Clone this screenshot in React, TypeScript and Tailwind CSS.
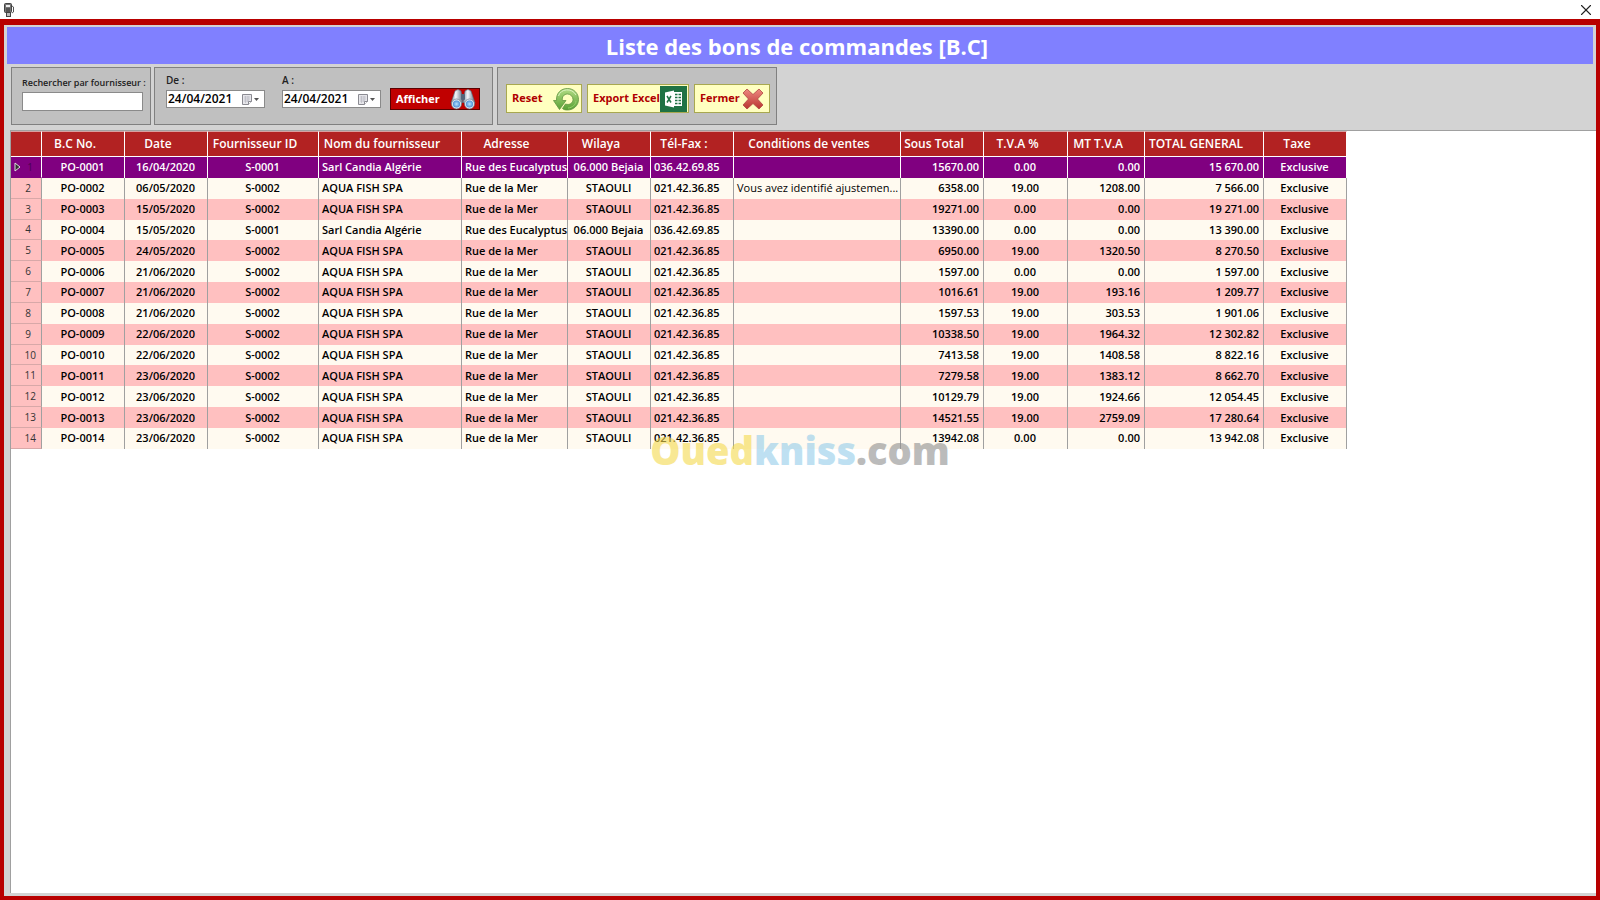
import { X } from "lucide-react";
import clsx from "clsx";

type Align = "left" | "center" | "right";

const columns: { label: string; width: string; align: Align; light?: boolean }[] = [
  { label: "B.C No.", width: "w-[83px]", align: "center" },
  { label: "Date", width: "w-[83px]", align: "center" },
  { label: "Fournisseur ID", width: "w-[111px]", align: "center" },
  { label: "Nom du fournisseur", width: "w-[143px]", align: "left" },
  { label: "Adresse", width: "w-[106px]", align: "left" },
  { label: "Wilaya", width: "w-[83px]", align: "center" },
  { label: "Tél-Fax :", width: "w-[83px]", align: "left" },
  { label: "Conditions de ventes", width: "w-[167px]", align: "left", light: true },
  { label: "Sous Total", width: "w-[83px]", align: "right" },
  { label: "T.V.A %", width: "w-[84px]", align: "center" },
  { label: "MT T.V.A", width: "w-[77px]", align: "right" },
  { label: "TOTAL GENERAL", width: "w-[119px]", align: "right" },
  { label: "Taxe", width: "w-[83px]", align: "center" },
];

const candia = ["S-0001", "Sarl Candia Algérie", "Rue des Eucalyptus", "06.000 Bejaia", "036.42.69.85"];
const aqua = ["S-0002", "AQUA FISH SPA", "Rue de la Mer", "STAOULI", "021.42.36.85"];

const rows: string[][] = [
  ["PO-0001", "16/04/2020", ...candia, "", "15670.00", "0.00", "0.00", "15 670.00", "Exclusive"],
  ["PO-0002", "06/05/2020", ...aqua, "Vous avez identifié ajustemen...", "6358.00", "19.00", "1208.00", "7 566.00", "Exclusive"],
  ["PO-0003", "15/05/2020", ...aqua, "", "19271.00", "0.00", "0.00", "19 271.00", "Exclusive"],
  ["PO-0004", "15/05/2020", ...candia, "", "13390.00", "0.00", "0.00", "13 390.00", "Exclusive"],
  ["PO-0005", "24/05/2020", ...aqua, "", "6950.00", "19.00", "1320.50", "8 270.50", "Exclusive"],
  ["PO-0006", "21/06/2020", ...aqua, "", "1597.00", "0.00", "0.00", "1 597.00", "Exclusive"],
  ["PO-0007", "21/06/2020", ...aqua, "", "1016.61", "19.00", "193.16", "1 209.77", "Exclusive"],
  ["PO-0008", "21/06/2020", ...aqua, "", "1597.53", "19.00", "303.53", "1 901.06", "Exclusive"],
  ["PO-0009", "22/06/2020", ...aqua, "", "10338.50", "19.00", "1964.32", "12 302.82", "Exclusive"],
  ["PO-0010", "22/06/2020", ...aqua, "", "7413.58", "19.00", "1408.58", "8 822.16", "Exclusive"],
  ["PO-0011", "23/06/2020", ...aqua, "", "7279.58", "19.00", "1383.12", "8 662.70", "Exclusive"],
  ["PO-0012", "23/06/2020", ...aqua, "", "10129.79", "19.00", "1924.66", "12 054.45", "Exclusive"],
  ["PO-0013", "23/06/2020", ...aqua, "", "14521.55", "19.00", "2759.09", "17 280.64", "Exclusive"],
  ["PO-0014", "23/06/2020", ...aqua, "", "13942.08", "0.00", "0.00", "13 942.08", "Exclusive"],
];

const alignClass: Record<Align, string> = {
  left: "text-left",
  center: "text-center",
  right: "text-right",
};

const AppIcon = () => (
  <svg className="h-[14px] w-[10px]" viewBox="0 0 10 14" aria-hidden="true">
    <rect x="0.5" y="0.5" width="7" height="9" rx="1" fill="#777" stroke="#444" />
    <rect x="2" y="2" width="4" height="2" fill="#eee" />
    <path d="M2 6h4M2 8h4" stroke="#333" />
    <path d="M8 3l1.5 1v5L8 10" fill="none" stroke="#555" />
    <rect x="2.5" y="9.5" width="4" height="4" fill="#bbb" stroke="#444" />
  </svg>
);

const CalendarIcon = () => (
  <svg className="h-[11px] w-[18px]" viewBox="0 0 18 11" aria-hidden="true">
    <path d="M0.5 0.5h9v7l-3 3h-6z" fill="#e6e6ea" stroke="#8b8b92" />
    <path d="M2 3h6M2 5h6M2 7h5M3.5 2v7M6 2v6" stroke="#b4b4bc" strokeWidth="0.6" />
    <path d="M9.5 7.5h-3v3" fill="#fff" stroke="#8b8b92" />
    <path d="M12 4h5l-2.5 3z" fill="#555" />
  </svg>
);

const BinocularsIcon = () => (
  <svg className="h-[22px] w-[26px] shrink-0" viewBox="0 0 26 22" aria-hidden="true">
    <defs>
      <linearGradient id="tube" x1="0" x2="1">
        <stop offset="0" stopColor="#7b8da0" />
        <stop offset="0.4" stopColor="#f4f8fb" />
        <stop offset="1" stopColor="#5c6d80" />
      </linearGradient>
      <radialGradient id="lens">
        <stop offset="0" stopColor="#b9e2ff" />
        <stop offset="1" stopColor="#4a90d9" />
      </radialGradient>
    </defs>
    <path d="M5 3Q8 0 11 3l2 11-5 5-7-4z" fill="url(#tube)" stroke="#5b6b7c" strokeWidth="0.6" />
    <path d="M15 3q3-3 6 0l4 12-7 4-5-5z" fill="url(#tube)" stroke="#5b6b7c" strokeWidth="0.6" />
    <rect x="11" y="6" width="4" height="6" rx="1" fill="#54657a" />
    <circle cx="6.5" cy="16" r="5" fill="#dfe8f0" stroke="#5b6b7c" strokeWidth="0.6" />
    <circle cx="6.5" cy="16" r="3.6" fill="url(#lens)" />
    <circle cx="19.5" cy="16" r="5" fill="#dfe8f0" stroke="#5b6b7c" strokeWidth="0.6" />
    <circle cx="19.5" cy="16" r="3.6" fill="url(#lens)" />
  </svg>
);

const ResetIcon = () => (
  <svg className="h-[24px] w-[26px] shrink-0" viewBox="0 0 26 24" aria-hidden="true">
    <defs>
      <linearGradient id="green" x1="0" y1="0" x2="0" y2="1">
        <stop offset="0" stopColor="#b4dd86" />
        <stop offset="1" stopColor="#57a033" />
      </linearGradient>
    </defs>
    <path
      d="M3.5 13.5C3 6 8 1.500 14.500 1.500C21 1.500 25.500 6.500 25.500 12.500C25.500 18.500 20.500 23 14.500 23C12 23 10.500 22.500 9.500 21.500L12.500 17C16.500 18.500 20 16 20 12.500C20 9.500 17.500 7 14.500 7C11 7 8.500 10 9.500 13.500H13L6.500 22.500L0.500 13.500Z"
      fill="url(#green)"
      stroke="#5f9440"
      strokeWidth="0.8"
      strokeLinejoin="round"
    />
    <path d="M5.500 9C7.500 1.500 19 .500 23 8" fill="none" stroke="#dcf3c0" />
    <path d="M15 21C19.500 20.500 22.500 18 23 14" fill="none" stroke="#95cf68" />
  </svg>
);

const ExcelIcon = () => (
  <svg className="h-[26px] w-[27px] shrink-0" viewBox="0 0 27 26" aria-hidden="true">
    <rect width="27" height="26" fill="#1f7244" />
    <path d="M13 6h9v14h-9z" fill="#fff" />
    <path
      d="M15 8.500h2.500M15 11.500h2.500M15 14.500h2.500M15 17.500h2.500M18.500 8.500H21M18.500 11.500H21M18.500 14.500H21M18.500 17.500H21"
      stroke="#1f7244"
      strokeWidth="1.500"
    />
    <path d="M5 6.500l9-2v17l-9-2z" fill="#fff" />
    <path d="M7 10l4 6.500M11 10l-4 6.500" stroke="#1f7244" strokeWidth="1.500" />
  </svg>
);

const CloseIcon = () => (
  <svg className="h-[22px] w-[22px] shrink-0" viewBox="0 0 22 22" aria-hidden="true">
    <defs>
      <linearGradient id="red" x1="0" y1="0" x2="0" y2="1">
        <stop offset="0" stopColor="#ee8a80" />
        <stop offset="1" stopColor="#b93430" />
      </linearGradient>
    </defs>
    <path
      d="M5 1l6 5.500L17 1l4 4-5.500 6 5.500 6-4 4-6-5.500L5 21l-4-4 5.500-6L1 5z"
      fill="url(#red)"
      stroke="#b04540"
      strokeWidth="0.8"
      strokeLinejoin="round"
    />
  </svg>
);

const DateField = ({ id, label }: { id: string; label: string }) => (
  <div>
    <label htmlFor={id} className="block text-[10px] leading-4 font-semibold text-[#222]">
      {label}
    </label>
    <div className="mt-[2px] flex h-[18px] w-[99px] items-center border border-[#8a8a8a] bg-white">
      <input
        id={id}
        defaultValue="24/04/2021"
        className="w-[75px] pl-px text-[12px] leading-4 font-semibold text-black outline-none"
      />
      <button type="button" aria-label="Calendrier">
        <CalendarIcon />
      </button>
    </div>
  </div>
);

const actionClass =
  "flex h-[29px] items-center justify-between border border-[#a8a850] bg-[#ffffc0] pl-[5px] text-[11px] font-bold text-[#b00000] whitespace-nowrap";

const Toolbar = () => (
  <div className="flex h-[58px] items-stretch pl-[7px]">
    <div className="w-[140px] border border-[#808080] bg-[#c0c0c0] pt-[7px] pl-[10px]">
      <label htmlFor="supplier" className="block text-[9px] leading-4 font-semibold whitespace-nowrap text-[#222]">
        Rechercher par fournisseur :
      </label>
      <input id="supplier" className="mt-px block h-[19px] w-[121px] border border-[#8a8a8a] bg-white px-1 text-[12px] outline-none" />
    </div>

    <div className="ml-[3px] flex w-[339px] border border-[#808080] bg-[#c0c0c0] pt-[4px] pl-[11px]">
      <DateField id="from" label="De :" />
      <div className="ml-[17px]">
        <DateField id="to" label="A :" />
      </div>
      <button
        type="button"
        className="mt-4 ml-[9px] flex h-[22px] w-[90px] items-center justify-between border border-[#5a0000] bg-[#c00000] pr-[3px] pl-[5px] text-[11px] font-bold text-white"
      >
        Afficher
        <BinocularsIcon />
      </button>
    </div>

    <div className="ml-[4px] flex w-[280px] gap-[5px] border border-[#808080] bg-[#c0c0c0] pt-4 pl-[8px]">
      <button type="button" className={clsx(actionClass, "w-[76px] pr-[2px]")}>
        Reset
        <ResetIcon />
      </button>
      <button type="button" className={clsx(actionClass, "w-[102px] pr-px")}>
        Export Excel
        <ExcelIcon />
      </button>
      <button type="button" className={clsx(actionClass, "w-[76px] pr-[5px]")}>
        Fermer
        <CloseIcon />
      </button>
    </div>
  </div>
);

const OrdersTable = () => (
  <table className="h-[318px] w-[1336px] table-fixed border-separate border-spacing-0 whitespace-nowrap">
    <thead>
      <tr className="h-[26px] bg-[#b22222] text-[12px] leading-5 text-white">
        <th
          className="w-[31px] border-t border-r border-b border-t-[#d8a0a0] border-r-white border-b-white"
          aria-label="Ligne"
        />
        {columns.map((col) => (
          <th
            key={col.label}
            className={clsx(
              "border-t border-r border-b border-t-[#d8a0a0] border-r-white border-b-white p-0 pr-4 text-center font-semibold",
              col.width
            )}
          >
            {col.label}
          </th>
        ))}
      </tr>
    </thead>
    <tbody>
      {rows.map((row, i) => {
        const selected = i === 0;
        return (
          <tr
            key={row[0]}
            className={clsx(
              "text-[11px] leading-4",
              selected ? "bg-[#800080] text-white" : i % 2 ? "bg-[#fffaf0] text-black" : "bg-[#ffc0c0] text-black"
            )}
          >
            <th
              scope="row"
              className={clsx(
                "border-r border-b p-0 text-right text-[10px] font-normal",
                selected
                  ? "border-r-white border-b-[#800080] pr-2 text-[#4b0050]"
                  : "border-r-[#a0a0a0] border-b-[#d8a8a8] bg-[#ffc0c0] text-[#333]",
                !selected && (i < 9 ? "pr-[10px]" : "pr-[5px]")
              )}
            >
              {selected ? (
                <span className="flex items-center justify-between pl-[3px]">
                  <svg className="h-[10px] w-[7px]" viewBox="0 0 7 10" aria-hidden="true">
                    <path d="M1 1l5 4-5 4z" fill="#333" stroke="#ddd" />
                  </svg>
                  1
                </span>
              ) : (
                i + 1
              )}
            </th>
            {row.map((value, c) => (
              <td
                key={columns[c].label}
                className={clsx(
                  "border-r py-0 pr-1 pl-[3px]",
                  selected ? "border-r-white" : "border-r-[#a0a0a0]",
                  columns[c].light ? "font-medium" : "font-semibold",
                  alignClass[columns[c].align]
                )}
              >
                {value}
              </td>
            ))}
          </tr>
        );
      })}
    </tbody>
  </table>
);

const Watermark = () => (
  <div className="pointer-events-none absolute inset-0 flex items-center justify-center font-['Open_Sans',sans-serif] text-[38px] leading-none font-extrabold opacity-60">
    <span className="text-[#f5d94e]">Oued</span>
    <span className="text-[#93cdea]">kniss</span>
    <span className="text-[#8f8f8f]">.com</span>
  </div>
);

export default function App() {
  return (
    <div className="relative flex min-h-screen flex-col bg-white font-['Open_Sans','Noto_Sans',sans-serif]">
      <header className="flex h-[19px] items-center justify-between pr-[5px] pl-[4px]">
        <AppIcon />
        <button type="button" aria-label="Fermer la fenêtre">
          <X className="h-[18px] w-[18px] text-[#222]" strokeWidth={1.5} />
        </button>
      </header>

      <main className="flex flex-1 flex-col border-4 border-t-[6px] border-[#b80000] bg-[#d3d3d3] pt-[2px] pb-[3px]">
        <h1 className="mx-[3px] h-[37px] bg-[#8080ff] pr-[6px] text-center text-[22px] leading-[38px] font-bold text-white">
          Liste des bons de commandes [B.C]
        </h1>
        <div className="pt-[3px] pb-[5px]">
          <Toolbar />
        </div>
        <section className="ml-[6px] flex-1 border-t border-l border-[#a0a0a0] bg-white">
          <OrdersTable />
        </section>
      </main>

      <Watermark />
    </div>
  );
}
